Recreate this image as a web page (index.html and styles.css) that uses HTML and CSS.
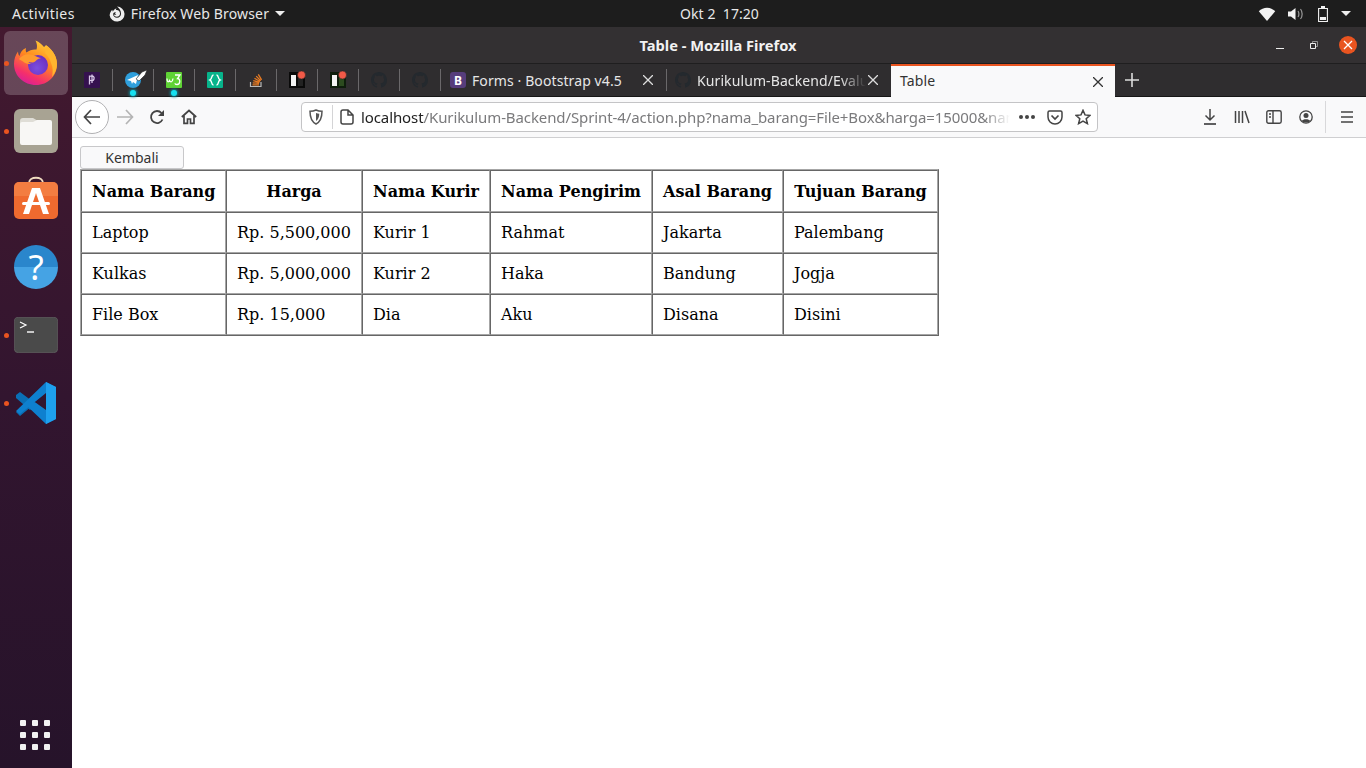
FILE: index.html
```html
<!DOCTYPE html>
<html lang="id">
<head>
<meta charset="utf-8">
<title>Table - Mozilla Firefox</title>
<link rel="stylesheet" href="styles.css">
</head>
<body>
<svg class="defs" width="0" height="0" aria-hidden="true">
  <defs>
    <symbol id="gh" viewBox="0 0 16 16"><path fill="#24292e" d="M8 0C3.58 0 0 3.58 0 8c0 3.54 2.29 6.53 5.47 7.59.4.07.55-.17.55-.38 0-.19-.01-.82-.01-1.49-2.01.37-2.53-.49-2.69-.94-.09-.23-.48-.94-.82-1.13-.28-.15-.68-.52-.01-.53.63-.01 1.08.58 1.23.82.72 1.21 1.87.87 2.33.66.07-.52.28-.87.51-1.07-1.78-.2-3.64-.89-3.64-3.95 0-.87.31-1.59.82-2.15-.08-.2-.36-1.02.08-2.12 0 0 .67-.21 2.2.82.64-.18 1.32-.27 2-.27s1.36.09 2 .27c1.53-1.04 2.2-.82 2.2-.82.44 1.1.16 1.92.08 2.12.51.56.82 1.27.82 2.15 0 3.07-1.87 3.75-3.65 3.95.29.25.54.73.54 1.48 0 1.07-.01 1.93-.01 2.2 0 .21.15.46.55.38A8.01 8.01 0 0 0 16 8c0-4.42-3.58-8-8-8z"/></symbol>
    <linearGradient id="ffbody" x1="0.8" y1="0" x2="0.3" y2="1"><stop offset="0" stop-color="#ffd43a"/><stop offset="0.45" stop-color="#ff8a1f"/><stop offset="0.8" stop-color="#f5306a"/><stop offset="1" stop-color="#d81f9a"/></linearGradient>
    <radialGradient id="ffglobe" cx="0.45" cy="0.65" r="0.7"><stop offset="0" stop-color="#7a4fe0"/><stop offset="1" stop-color="#6a2bbd"/></radialGradient>
  </defs>
</svg>

<header class="topbar">
  <div class="top-left">
    <span class="activities">Activities</span>
    <span class="appmenu">
      <svg class="ff-mono" viewBox="0 0 16 16" width="16" height="16"><path fill="#eee" d="M8 .6a7.500 7.500 0 1 1-7.400 8.600c.4-3 1.700-4.600 2.800-5.400-.1.800.1 1.400.5 1.800C4.600 3.600 6 2.600 7.600 2.400 7 3 6.800 3.600 7 4.100c2.600-.3 4.100 1.600 4 3.600-.1 1.800-1.500 3-3.200 3-1.500 0-2.700-1-2.900-2.300.8.700 2 .5 2.500-.2-1.700-.1-1.500-1.300-.5-1.700C5.700 5.800 4.300 6.600 4.200 8c-.1 2 1.500 3.800 3.800 3.800 2.500 0 4-2 4-4C12 4 9.800 2 8 .6z"/></svg>
      <span class="appname">Firefox Web Browser</span>
      <i class="caret"></i>
    </span>
  </div>
  <div class="clock">Okt 2&nbsp;&nbsp;17:20</div>
  <div class="top-right">
    <svg width="18" height="14" viewBox="0 0 18 14"><path fill="#f2f2f2" d="M9 14L.8 4.200C3 2 5.900.8 9 .8s6 1.200 8.200 3.400z"/></svg>
    <svg width="16" height="14" viewBox="0 0 16 14"><path fill="#f2f2f2" d="M0 4.500h3L7.500 1v12L3 9.500H0z"/><path fill="none" stroke="#999" stroke-width="1.200" d="M10 4c1.200 1.500 1.200 4.500 0 6M12.500 2c2.200 2.800 2.200 7.200 0 10"/></svg>
    <svg class="battery" width="10" height="16" viewBox="0 0 10 16"><path fill="none" stroke="#f2f2f2" stroke-width="1.100" d="M.6 2.500h8.800v13H.6z"/><path fill="#f2f2f2" d="M3 0h4v2H3zM2 11h6v3H2z"/></svg>
    <i class="caret caret-last"></i>
  </div>
</header>

<div class="desktop">
  <nav class="dock">
    <div class="dock-item active">
      <i class="run-dot"></i>
      <svg width="46" height="46" viewBox="0 0 46 46">
        <path fill="url(#ffbody)" d="M23 45C11 45 1 36 1 24c0-5 1.500-9 4-12.500.1 2 .6 3.500 1.500 4.500C7.500 12 9.500 9.500 13 8c-.5 2-.2 3.500.5 4.500 3-2.500 7-3.500 10-3 1-3 .5-6-1-9 4 1.500 6.500 4 8.500 6.500 1-.8 1.500-1.500 2-2 5 3.500 11 10 11 19C44 36 35 45 23 45z"/>
        <path fill="#ffb52e" d="M34 6c5 4 10 10 10 18 0 5-2 9-5 13 1-5 1-10-1-14-1-4-3-7-6-10z"/>
        <circle cx="25" cy="25" r="10" fill="url(#ffglobe)"/>
        <path fill="#ff9b2e" d="M6 19c3-4 9-6 14-4 3 1 6 3 8 3-4 1-4 2-6 3.500-2 1.800-5 .5-7 .5 1.500 1 2.500 1.500 4 1.500-3 1-7 0-9-2-1.500-1-3-1.500-4-2.500z"/>
      </svg>
    </div>
    <div class="dock-item">
      <i class="run-dot"></i>
      <svg width="44" height="44" viewBox="0 0 44 44">
        <rect width="44" height="44" rx="6" fill="#a8a393"/>
        <path fill="#dfddd6" d="M6 12a3 3 0 0 1 3-3h10l5 3h11v12H6z"/>
        <path fill="#f8f7f5" d="M6 15a2 2 0 0 1 2-2h11l4-2h13a2 2 0 0 1 2 2v21a2 2 0 0 1-2 2H8a2 2 0 0 1-2-2z"/>
      </svg>
    </div>
    <div class="dock-item">
      <svg width="44" height="46" viewBox="0 0 44 46">
        <path fill="none" stroke="#f0dcc0" stroke-width="2" d="M15 7c0-7 14-7 14 0"/>
        <rect y="6" width="44" height="37" rx="5" fill="#ef6a2f"/>
        <path fill="#f58a4e" d="M5 6h34a5 5 0 0 1 5 5v9H0v-9a5 5 0 0 1 5-5z" opacity=".6"/>
        <path fill="#fff" d="M18 12h8l9 26h-6L22 17l-7 21H9z"/>
        <rect x="8" y="26" width="28" height="3" rx="1.500" fill="#fff"/>
      </svg>
    </div>
    <div class="dock-item">
      <span class="help">?</span>
    </div>
    <div class="dock-item">
      <i class="run-dot"></i>
      <svg width="44" height="36" viewBox="0 0 44 36">
        <rect x=".3" y=".3" width="43.400" height="35.400" rx="4" fill="#4a4a4a" stroke="#6a6a6a" stroke-width=".6"/>
        <path fill="none" stroke="#fff" stroke-width="1.200" d="M6 5l6 3-6 3"/>
        <path stroke="#fff" stroke-width="1.400" d="M13 15h7"/>
      </svg>
    </div>
    <div class="dock-item">
      <i class="run-dot"></i>
      <svg width="44" height="44" viewBox="0 0 44 44">
        <path fill="#0a6fb5" d="M2 14l4-3 16 12-6 6L2 17z M2 31l12-10 4 4L6 35z"/>
        <path fill="#0e80cf" d="M32 1l10 5v32l-10 5-20-19 6-5 14 10V12L6 33l-4-3z"/>
        <path fill="#1ea0ee" d="M32 1l10 5v32l-10 5z"/>
      </svg>
    </div>
    <div class="dock-grid">
      <i></i><i></i><i></i><i></i><i></i><i></i><i></i><i></i><i></i>
    </div>
  </nav>

  <main class="window">
    <div class="titlebar">
      <span class="title">Table - Mozilla Firefox</span>
      <div class="win-controls">
        <span class="win-btn"><svg width="10" height="10" viewBox="0 0 10 10"><path stroke="#eee" stroke-width="1" d="M1 8.500h8"/></svg></span>
        <span class="win-btn"><svg width="10" height="10" viewBox="0 0 10 10"><path fill="none" stroke="#eee" d="M1.500 3.500h5v5h-5z"/><path fill="none" stroke="#aaa" stroke-width=".8" d="M3.500 3V1.500h5v5H7"/></svg></span>
        <span class="win-close"><svg width="10" height="10" viewBox="0 0 10 10"><path stroke="#fff" stroke-width="1.300" d="M1 1l8 8M9 1l-8 8"/></svg></span>
      </div>
    </div>

    <div class="tabbar">
      <div class="pin">
        <svg width="16" height="16" viewBox="0 0 16 16"><rect width="16" height="16" rx="1" fill="#35114f"/><path fill="none" stroke="#d9c8e8" stroke-width="1.300" d="M5.500 3.500v9M5.500 4.500c4-1.500 5 .5 4.500 2.500s-2.500 2-4.500 1M8 2.500V11"/></svg>
      </div>
      <div class="pin">
        <svg class="over" width="24" height="18" viewBox="0 0 24 18"><circle cx="8" cy="10" r="8" fill="#2f9fdc"/><path fill="#fff" d="M2 10l11-5-2 9-3-2-1 2-1-3z"/><path fill="#fff" stroke="#222" stroke-width=".6" d="M11 9l6-7 5-2-2 5-6 6z"/></svg>
        <i class="attn"></i>
      </div>
      <div class="pin">
        <svg width="16" height="16" viewBox="0 0 16 16"><rect width="16" height="16" rx="1" fill="#5fd335"/><path fill="none" stroke="#fff" stroke-width="1.300" d="M1 6.500c0 4 1.500 4 2.500 2 1 2 3 2 3.500-2M9 3h5l-2.500 3.500c3 0 3.200 6-.5 6-1 0-2-.5-2-1.200"/></svg>
        <i class="attn"></i>
      </div>
      <div class="pin">
        <svg width="16" height="16" viewBox="0 0 16 16"><rect width="16" height="16" rx="1" fill="#07b48b"/><path fill="none" stroke="#fff" stroke-width="1.400" d="M6.500 3C4 3 5.500 7 3 8c2.500 1 1 5 3.500 5M9.500 3C12 3 10.500 7 13 8c-2.500 1-1 5-3.500 5"/></svg>
      </div>
      <div class="pin">
        <svg width="16" height="16" viewBox="0 0 16 16"><path fill="none" stroke="#b8b8b8" stroke-width="1.200" d="M2.500 10v4.500h10.500V10"/><path fill="none" stroke="#e87a22" stroke-width="1.300" d="M4.500 12.800h6.500M4.700 10.800l6.400.6M5.300 8.600l6.200 1.700M6.500 6.300l5.500 3.200M8.200 4.100l4.500 4.600M10.300 2.300l3.300 5.500"/></svg>
      </div>
      <div class="pin">
        <svg class="over2" width="19" height="18" viewBox="0 0 19 18"><rect y="2" width="16" height="16" fill="#0a0a0a"/><rect x="2" y="5" width="5" height="11" fill="#f4f4f4"/><rect x="9" y="5" width="5" height="11" fill="#222"/><circle cx="12.500" cy="5" r="4" fill="#f25a48" stroke="#222" stroke-width=".5"/></svg>
      </div>
      <div class="pin">
        <svg class="over2" width="19" height="18" viewBox="0 0 19 18"><rect y="2" width="16" height="16" fill="#0e1e0c"/><rect x="2" y="5" width="5" height="11" fill="#f4f4f4"/><rect x="9" y="5" width="5" height="11" fill="#2c4b1f"/><circle cx="12.500" cy="5" r="4" fill="#f25a48" stroke="#222" stroke-width=".5"/></svg>
      </div>
      <div class="pin"><svg width="16" height="16"><use href="#gh"/></svg></div>
      <div class="pin"><svg width="16" height="16"><use href="#gh"/></svg></div>

      <div class="tab">
        <svg class="fav" width="16" height="16" viewBox="0 0 16 16"><rect width="16" height="16" rx="3" fill="#563d7c"/><text x="8" y="12.500" class="bs-mark">B</text></svg>
        <span class="tab-label">Forms · Bootstrap v4.5</span>
        <svg class="tab-x" width="10" height="10" viewBox="0 0 10 10"><path stroke="#ddd" stroke-width="1.300" d="M0 0l10 10M10 0L0 10"/></svg>
      </div>
      <div class="tab">
        <svg class="fav" width="16" height="16"><use href="#gh"/></svg>
        <span class="tab-label tab-fade">Kurikulum-Backend/Evalu</span>
        <svg class="tab-x" width="10" height="10" viewBox="0 0 10 10"><path stroke="#ddd" stroke-width="1.300" d="M0 0l10 10M10 0L0 10"/></svg>
      </div>
      <div class="tab tab-active">
        <span class="tab-label">Table</span>
        <svg class="tab-x" width="10" height="10" viewBox="0 0 10 10"><path stroke="#333" stroke-width="1.300" d="M0 0l10 10M10 0L0 10"/></svg>
      </div>
      <svg class="newtab" width="14" height="14" viewBox="0 0 14 14"><path stroke="#ddd" stroke-width="1.600" d="M7 0v14M0 7h14"/></svg>
    </div>

    <div class="navbar">
      <span class="back"><svg width="18" height="16" viewBox="0 0 18 16"><path fill="none" stroke="#444" stroke-width="1.700" d="M8 1L1.500 8 8 15M1.500 8H17"/></svg></span>
      <span class="nav-btn"><svg width="18" height="16" viewBox="0 0 18 16"><path fill="none" stroke="#b4b4b4" stroke-width="1.700" d="M10 1l6.500 7L10 15M16.500 8H1"/></svg></span>
      <span class="nav-btn"><svg width="16" height="16" viewBox="0 0 16 16"><path fill="none" stroke="#444" stroke-width="1.800" d="M13.500 10.500A6 6 0 1 1 12.500 4"/><path fill="#444" d="M15 1v6H9z"/></svg></span>
      <span class="nav-btn"><svg width="16" height="16" viewBox="0 0 16 16"><path fill="none" stroke="#444" stroke-width="1.700" d="M.8 8L8 1.500 15.200 8M3 6.500V14.300h3.500V10h3v4.300H13V6.500"/></svg></span>
      <div class="urlbar">
        <svg class="shield" width="14" height="16" viewBox="0 0 14 16"><path fill="none" stroke="#555" stroke-width="1.500" d="M7 1c2 1 4 1.300 6 1.300 0 6-1.500 10.500-6 12.700C2.500 12.800 1 8.300 1 2.300 3 2.300 5 2 7 1z"/><path fill="#555" d="M7 4c1.200.5 2.200.6 3.300.7C10.200 8 9.300 10.500 7 12z"/></svg>
        <i class="url-sep"></i>
        <svg class="pageicon" width="14" height="16" viewBox="0 0 14 16"><path fill="none" stroke="#444" stroke-width="1.500" d="M3 1h5l5 5v7a2 2 0 0 1-2 2H3a2 2 0 0 1-2-2V3a2 2 0 0 1 2-2zM8 1v5h5"/></svg>
        <span class="url-text"><b>localhost</b>/Kurikulum-Backend/Sprint-4/action.php?nama_barang=File+Box&amp;harga=15000&amp;nam</span>
        <span class="dots"><i></i><i></i><i></i></span>
        <svg class="pocket" width="16" height="15" viewBox="0 0 16 15"><path fill="none" stroke="#444" stroke-width="1.500" d="M2.500 1h11A1.500 1.500 0 0 1 15 2.500V7a7 7 0 0 1-14 0V2.500A1.500 1.500 0 0 1 2.500 1z"/><path fill="none" stroke="#444" stroke-width="1.700" d="M4.500 5.500L8 9l3.500-3.500"/></svg>
        <svg class="star" width="16" height="16" viewBox="0 0 16 16"><path fill="none" stroke="#444" stroke-width="1.500" d="M8 1.300l2 4.600 5 .5-3.800 3.300 1.200 4.900L8 12l-4.400 2.600 1.200-4.900L1 6.400l5-.5z"/></svg>
      </div>
      <div class="nav-tools">
        <svg width="14" height="16" viewBox="0 0 14 16"><path fill="none" stroke="#444" stroke-width="1.500" d="M7 0v11M2.500 6.500L7 11l4.500-4.500"/><path stroke="#444" stroke-width="1.700" d="M1 15h12"/></svg>
        <svg width="16" height="14" viewBox="0 0 16 14"><path fill="none" stroke="#444" stroke-width="1.500" d="M1.500 1v12M5 1v12M8.500 1v12M11 1l4 12"/></svg>
        <svg width="16" height="14" viewBox="0 0 16 14"><path fill="none" stroke="#444" stroke-width="1.400" d="M2.500.8h11A1.700 1.700 0 0 1 15.200 2.500v9a1.700 1.700 0 0 1-1.700 1.700h-11A1.700 1.700 0 0 1 .8 11.500v-9A1.700 1.700 0 0 1 2.500.8zM7 1v12M3 4h2M3 7h2"/></svg>
        <svg width="14" height="14" viewBox="0 0 14 14"><circle cx="7" cy="7" r="6.200" fill="none" stroke="#444" stroke-width="1.300"/><circle cx="7" cy="5.500" r="2.500" fill="#444"/><path fill="#444" d="M2.800 11c1-2.500 7.400-2.500 8.400 0-2 2-6.400 2-8.400 0z"/></svg>
        <i class="tool-sep"></i>
        <svg class="hamburger" width="14" height="12" viewBox="0 0 14 12"><path stroke="#444" stroke-width="1.500" d="M1 1h12M1 6h12M1 11h12"/></svg>
      </div>
    </div>

    <section class="page">
      <button class="kembali" type="button">Kembali</button>
      <table class="data">
        <thead>
          <tr><th class="c1">Nama Barang</th><th class="c2">Harga</th><th class="c3">Nama Kurir</th><th class="c4">Nama Pengirim</th><th class="c5">Asal Barang</th><th class="c6">Tujuan Barang</th></tr>
        </thead>
        <tbody>
          <tr><td>Laptop</td><td>Rp. 5,500,000</td><td>Kurir 1</td><td>Rahmat</td><td>Jakarta</td><td>Palembang</td></tr>
          <tr><td>Kulkas</td><td>Rp. 5,000,000</td><td>Kurir 2</td><td>Haka</td><td>Bandung</td><td>Jogja</td></tr>
          <tr><td>File Box</td><td>Rp. 15,000</td><td>Dia</td><td>Aku</td><td>Disana</td><td>Disini</td></tr>
        </tbody>
      </table>
    </section>
  </main>
</div>
</body>
</html>
```

FILE: styles.css
```css
* { box-sizing: border-box; }
html, body { margin: 0; padding: 0; height: 100%; }
body {
  width: 1366px;
  height: 768px;
  overflow: hidden;
  display: flex;
  flex-direction: column;
  font-family: "Noto Sans", "Open Sans", sans-serif;
  background: #fff;
}
svg { display: block; flex: none; }
.defs { position: absolute; }

/* GNOME top bar */
.topbar {
  height: 27px;
  flex: none;
  background: #1d1d1d;
  color: #e8e8e8;
  font-size: 14px;
  display: grid;
  grid-template-columns: 1fr auto 1fr;
  align-items: center;
  padding: 0 15px 0 12px;
}
.top-left { display: flex; align-items: center; gap: 34px; }
.activities { letter-spacing: 0.45px; }
.appmenu { display: flex; align-items: center; gap: 6px; }
.appname { letter-spacing: 0.15px; }
.clock { margin-left: 76px; letter-spacing: 0.05px; }
.caret {
  display: block;
  width: 0;
  height: 0;
  border: 5px solid transparent;
  border-top: 5px solid #eee;
  border-bottom: 0;
}
.top-right { display: flex; align-items: center; justify-content: flex-end; gap: 12px; }
.battery { margin-left: 2px; }
.caret-last { margin-left: 1px; }

.desktop { flex: 1; display: flex; min-height: 0; }

/* Dock */
.dock {
  width: 72px;
  flex: none;
  background: linear-gradient(180deg, #43192f 0%, #32152f 50%, #26132a 100%);
  display: flex;
  flex-direction: column;
  padding-top: 2px;
}
.dock-item {
  height: 68px;
  flex: none;
  display: flex;
  align-items: center;
  justify-content: center;
  position: relative;
}
.dock-item.active::before {
  content: "";
  position: absolute;
  left: 4px;
  top: 2px;
  width: 64px;
  height: 64px;
  border-radius: 6px;
  background: rgba(255, 255, 255, 0.2);
}
.dock-item svg { position: relative; }
.run-dot {
  position: absolute;
  left: 4px;
  top: 31.5px;
  width: 5px;
  height: 5px;
  border-radius: 50%;
  background: #e95420;
}
.help {
  width: 44px;
  height: 44px;
  border-radius: 50%;
  background: linear-gradient(180deg, #2a86cc 50%, #45a3e4 50%);
  color: #fff;
  font: 400 35px/44px "Noto Sans", sans-serif;
  text-align: center;
}
.dock-grid {
  margin: auto 20px 18px;
  display: grid;
  grid-template-columns: repeat(3, 6px);
  gap: 6px;
}
.dock-grid i { width: 6px; height: 6px; background: #f2f2f2; border-radius: 1px; }

/* Browser window */
.window { flex: 1; display: flex; flex-direction: column; min-width: 0; }
.titlebar {
  height: 37px;
  flex: none;
  background: #333032;
  color: #f2f2f2;
  position: relative;
  display: flex;
  align-items: center;
  justify-content: center;
  border-bottom: 1px solid #1f1e1f;
}
.title { font-size: 14.67px; font-weight: 700; position: relative; left: -1px; }
.win-controls {
  position: absolute;
  right: 9px;
  top: 9px;
  display: flex;
  align-items: center;
  gap: 14px;
}
.win-btn { width: 20px; height: 18px; display: flex; align-items: center; justify-content: center; }
.win-btn:first-child { position: relative; left: 4px; }
.win-btn:nth-child(2) { position: relative; left: 4px; }
.win-close {
  width: 18px;
  height: 18px;
  margin-left: 5px;
  border-radius: 50%;
  background: #e95420;
  display: flex;
  align-items: center;
  justify-content: center;
}

.tabbar {
  height: 33px;
  flex: none;
  background: #2f2d2f;
  border-bottom: 1px solid #161616;
  display: flex;
  align-items: stretch;
  color: #e6e6e6;
  font-size: 14px;
}
.pin {
  width: 41px;
  flex: none;
  position: relative;
  display: flex;
  align-items: center;
  justify-content: center;
  padding-right: 1px;
}
.pin::after {
  content: "";
  position: absolute;
  right: 0;
  top: 5px;
  bottom: 5px;
  width: 1px;
  background: #6a686a;
}
.pin .over { margin-left: 8px; margin-top: -2px; }
.pin .over2 { margin-left: 3px; margin-top: -2px; }
.attn {
  position: absolute;
  left: 17px;
  bottom: 0;
  width: 6px;
  height: 6px;
  border-radius: 50%;
  background: #15e0f0;
  box-shadow: 0 0 3px 1px #0f8a9c;
}
.tab {
  width: 225px;
  flex: none;
  display: flex;
  align-items: center;
  padding: 0 13px 0 9px;
  position: relative;
}
.tab + .tab::before {
  content: "";
  position: absolute;
  left: 0;
  top: 5px;
  bottom: 5px;
  width: 1px;
  background: #6a686a;
}
.fav { margin-right: 6px; }
.bs-mark { font: 700 12px "Noto Sans", sans-serif; fill: #fff; text-anchor: middle; }
.tab-label { flex: 1; min-width: 0; white-space: nowrap; letter-spacing: 0.1px; }
.tab-fade {
  -webkit-mask-image: linear-gradient(90deg, #000 85%, transparent 100%);
  mask-image: linear-gradient(90deg, #000 85%, transparent 100%);
}
.tab-x { margin-left: 2px; }
.tab-active {
  width: 224px;
  background: #f9f9fa;
  color: #333;
  border-top: 2px solid #e95420;
  height: 33px;
  padding: 0 12px 0 9px;
}
.tab-active::before { content: none !important; }
.tab-active .tab-label { padding-bottom: 2px; }
.newtab { align-self: center; margin-left: 10px; }

.navbar {
  height: 41px;
  flex: none;
  background: #f9f9fa;
  border-bottom: 1px solid #cfcfd1;
  display: flex;
  align-items: center;
  padding-left: 3px;
}
.back {
  width: 34px;
  height: 34px;
  border-radius: 50%;
  border: 1px solid #b1b1b3;
  background: #fff;
  display: flex;
  align-items: center;
  justify-content: center;
  flex: none;
}
.nav-btn { width: 32px; display: flex; justify-content: center; flex: none; }
.urlbar {
  margin-left: 96px;
  width: 797px;
  height: 30px;
  flex: none;
  background: #fff;
  border: 1px solid #c4c4c6;
  border-radius: 4px;
  display: flex;
  align-items: center;
  padding-left: 7px;
  color: #7a7a7c;
  font-size: 15px;
}
.url-sep { width: 1px; height: 24px; background: #d4d4d6; margin: 0 7px 0 9px; flex: none; }
.url-text {
  width: 649px;
  margin-left: 7px;
  white-space: nowrap;
  flex: none;
  letter-spacing: -0.1px;
  -webkit-mask-image: linear-gradient(90deg, #000 96%, transparent 100%);
  mask-image: linear-gradient(90deg, #000 96%, transparent 100%);
}
.url-text b { font-weight: 400; color: #222; }
.dots { display: flex; gap: 2px; margin-left: 9px; flex: none; }
.dots i { width: 4px; height: 4px; border-radius: 50%; background: #444; }
.pocket { margin-left: 12px; }
.star { margin-left: 12px; }
.nav-tools { display: flex; align-items: center; margin-left: 105px; gap: 16.5px; height: 100%; }
.tool-sep { width: 1px; height: 32px; background: #d8d8da; margin: 0 -4px 0 -4px; }
.hamburger { margin-left: 1px; }

/* Page */
.page { flex: 1; background: #fff; padding: 8px; min-height: 0; }
.kembali {
  display: block;
  width: 104px;
  height: 23px;
  padding: 0;
  background: #f9f9fa;
  border: 1px solid #c8c8ca;
  border-radius: 3px;
  color: #333;
  font: 14px "Noto Sans", sans-serif;
}
.data {
  border: 1px solid;
  border-color: #a6a6a6 #666 #666 #a6a6a6;
  border-spacing: 0;
  border-collapse: separate;
  color: #000;
  font: 16px "DejaVu Serif", serif;
  table-layout: fixed;
  width: 859px;
}
.data th, .data td {
  border: 1px solid;
  border-color: #666 #a6a6a6 #a6a6a6 #666;
  padding: 10px;
  text-align: left;
  height: 41px;
  white-space: nowrap;
}
.data th { text-align: center; font-weight: 700; height: 42px; }
.c1 { width: 145px; }
.c2 { width: 136px; }
.c3 { width: 128px; }
.c4 { width: 162px; }
.c5 { width: 131px; }
.c6 { width: 155px; }
```
